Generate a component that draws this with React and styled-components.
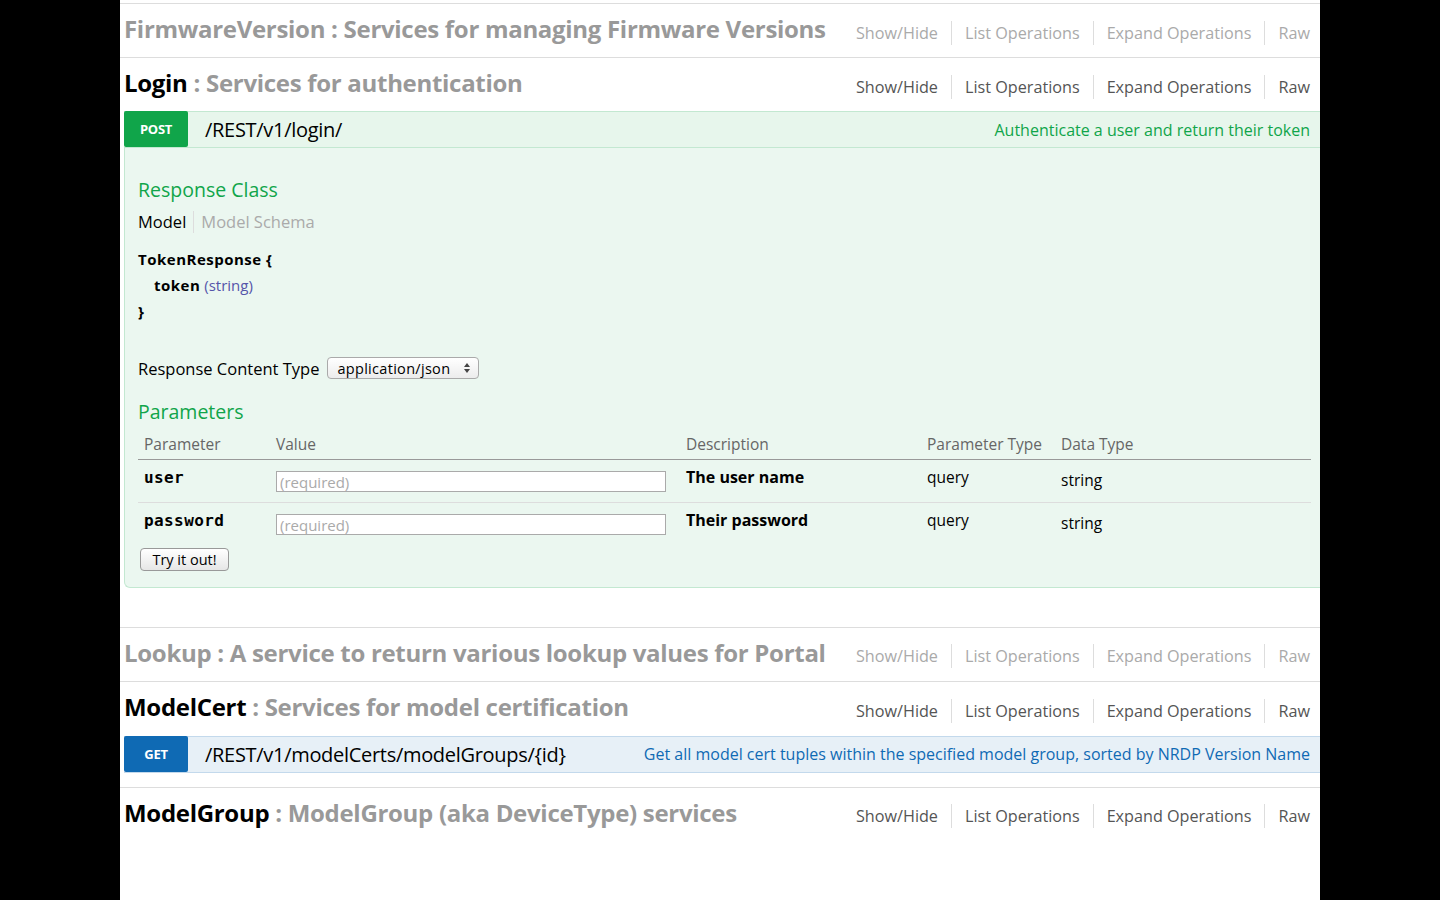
import React from 'react';
import styled, { createGlobalStyle, css } from 'styled-components';

const GlobalStyle = createGlobalStyle`
  html, body {
    margin: 0;
    padding: 0;
    background: #000;
  }
  body {
    font-family: "Open Sans", "DejaVu Sans", sans-serif;
    color: #000;
  }
  * { box-sizing: border-box; }
`;

const METHOD_COLORS = {
  post: { bg: '#e7f6ec', border: '#c3e8d1', badge: '#10a54a', text: '#10a54a' },
  get: { bg: '#e7f0f7', border: '#c3d9ec', badge: '#0f6ab4', text: '#0f6ab4' },
};

const Page = styled.div`
  width: 1200px;
  min-height: 900px;
  margin: 0 auto;
  padding-top: 3px;
  background: #fff;
`;

const ResourceList = styled.ul`
  list-style: none;
  margin: 0;
  padding: 0;
  border-top: 1px solid #ddd;
`;

const Resource = styled.li`
  border-bottom: ${(p) => (p.$last ? 'none' : '1px solid #ddd')};
  padding-bottom: ${(p) => p.$gap || 0}px;
`;

const Heading = styled.div`
  display: flex;
  align-items: center;
  justify-content: space-between;
  height: ${(p) => p.$h || 53}px;
  padding: 0 10px 0 4px;
`;

const Title = styled.h2`
  margin: -4px 0 0;
  font-size: 24px;
  font-weight: 700;
  letter-spacing: -0.3px;
  white-space: nowrap;
  color: #999;
`;

const TitleName = styled.span`
  color: ${(p) => (p.$faded ? '#999' : '#000')};
`;

const Options = styled.ul`
  display: flex;
  flex-shrink: 0;
  list-style: none;
  margin: 4px 0 0;
  padding: 0;
  font-size: 16.2px;
  white-space: nowrap;
  color: ${(p) => (p.$faded ? '#aaa' : '#555')};
`;

const Option = styled.li`
  padding: 0 13px;
  line-height: 24px;
  border-left: 1px solid #ddd;
  &:first-child { border-left: none; }
  &:last-child { padding-right: 0; }
`;

const OpBar = styled.div`
  display: flex;
  align-items: center;
  height: 37px;
  margin-left: 4px;
  background: ${(p) => METHOD_COLORS[p.$method].bg};
  border: 1px solid ${(p) => METHOD_COLORS[p.$method].border};
  border-left: none;
  border-right: none;
`;

const Badge = styled.span`
  width: 64px;
  height: 36px;
  margin-top: -1px;
  display: flex;
  align-items: center;
  justify-content: center;
  background: ${(p) => METHOD_COLORS[p.$method].badge};
  color: #fff;
  font-size: 13px;
  font-weight: 700;
  letter-spacing: -0.3px;
  border-radius: 2px;
`;

const Path = styled.span`
  margin-left: 17px;
  font-size: 20px;
  letter-spacing: -0.3px;
  flex: 1;
`;

const Summary = styled.span`
  padding-right: 10px;
  font-size: 16px;
  color: ${(p) => METHOD_COLORS[p.$method].text};
`;

const Content = styled.div`
  margin-left: 4px;
  padding: 29px 10px 16px 13px;
  background: #ebf7f0;
  border: 1px solid #c3e8d1;
  border-top: none;
  border-right: none;
  border-radius: 0 0 0 6px;
`;

const SectionTitle = styled.h4`
  margin: ${(p) => p.$mt || 0}px 0 0;
  font-size: 19.5px;
  font-weight: 400;
  line-height: 26px;
  color: #10a54a;
`;

const Tabs = styled.div`
  display: flex;
  margin-top: 8px;
  font-size: 16.5px;
  line-height: 22px;
`;

const Tab = styled.span`
  padding: 0 7px;
  color: ${(p) => (p.$active ? '#000' : '#aaa')};
  border-left: ${(p) => (p.$active ? 'none' : '1px solid #ddd')};
  &:first-child { padding-left: 0; }
`;

const Signature = styled.div`
  margin-top: 13px;
  font-size: 15px;
  line-height: 26px;
`;

const SigLine = styled.div`
  padding-left: ${(p) => (p.$indent ? 16 : 0)}px;
`;

const Strong = styled.b`
  font-weight: 700;
  letter-spacing: 0.5px;
`;

const PropType = styled.span`
  color: #55a;
`;

const ContentTypeRow = styled.div`
  display: flex;
  align-items: center;
  gap: 8px;
  margin-top: 32px;
  height: 24px;
  font-size: 16.5px;
`;

const SelectBox = styled.div`
  display: flex;
  align-items: center;
  justify-content: space-between;
  width: 152px;
  height: 22px;
  padding: 0 8px 0 9px;
  font-size: 14.5px;
  letter-spacing: 0.3px;
  border: 1px solid #aaa;
  border-radius: 4px;
  background: linear-gradient(#fff, #ececec);
`;

const ParamTable = styled.table`
  width: 1173px;
  border-collapse: collapse;
  table-layout: fixed;
`;

const Th = styled.th`
  height: 34px;
  padding: 8px 6px 4px;
  text-align: left;
  vertical-align: top;
  font-size: 15.5px;
  font-weight: 400;
  line-height: 22px;
  color: #666;
  border-bottom: 1px solid #999;
`;

const Row = styled.tr`
  height: 43px;
  border-bottom: ${(p) => (p.$last ? 'none' : '1px solid #ddd')};
`;

const Td = styled.td`
  padding: 6px 6px 0;
  vertical-align: top;
  font-size: 15.5px;
  line-height: 22px;
  ${(p) => p.$low && css`padding-top: 9px;`}
`;

const Code = styled.span`
  font-family: "DejaVu Sans Mono", "Liberation Mono", monospace;
  font-weight: 700;
  font-size: 16px;
  letter-spacing: 0.4px;
`;

const Desc = styled.span`
  font-weight: 700;
  font-size: 16px;
`;

const ValueInput = styled.input`
  display: block;
  width: 390px;
  height: 21px;
  margin-top: 5px;
  padding: 0 3px;
  font-family: "Open Sans", sans-serif;
  font-size: 15px;
  border: 1px solid #aaa;
  background: #fff;
  &::placeholder { color: #aaa; }
`;

const TryButton = styled.button`
  display: block;
  margin: 2px 0 0 2px;
  width: 89px;
  height: 23px;
  padding: 0;
  font-family: "Open Sans", sans-serif;
  font-size: 14.5px;
  color: #000;
  border: 1px solid #999;
  border-radius: 4px;
  background: linear-gradient(#fff, #e6e6e6);
`;

const Arrows = () => (
  <svg width="6" height="10" viewBox="0 0 6 10">
    <path d="M0 4 L3 0 L6 4 Z M0 6 L3 10 L6 6 Z" fill="#444" />
  </svg>
);

const OptionLinks = ({ faded }) => (
  <Options $faded={faded}>
    <Option>Show/Hide</Option>
    <Option>List Operations</Option>
    <Option>Expand Operations</Option>
    <Option>Raw</Option>
  </Options>
);

const ResourceHeading = ({ name, desc, faded, h }) => (
  <Heading $h={h}>
    <Title>
      <TitleName $faded={faded}>{name}</TitleName> : {desc}
    </Title>
    <OptionLinks faded={faded} />
  </Heading>
);

const params = [
  { name: 'user', desc: 'The user name' },
  { name: 'password', desc: 'Their password' },
];

export default function App() {
  return (
    <Page>
      <GlobalStyle />
      <ResourceList>
        <Resource>
          <ResourceHeading
            name="FirmwareVersion"
            desc="Services for managing Firmware Versions"
            faded
          />
        </Resource>

        <Resource $gap={39}>
          <ResourceHeading name="Login" desc="Services for authentication" />
          <OpBar $method="post">
            <Badge $method="post">POST</Badge>
            <Path>/REST/v1/login/</Path>
            <Summary $method="post">Authenticate a user and return their token</Summary>
          </OpBar>
          <Content>
            <SectionTitle>Response Class</SectionTitle>
            <Tabs>
              <Tab $active>Model</Tab>
              <Tab>Model Schema</Tab>
            </Tabs>
            <Signature>
              <SigLine><Strong>TokenResponse {'{'}</Strong></SigLine>
              <SigLine $indent>
                <Strong>token</Strong> <PropType>(string)</PropType>
              </SigLine>
              <SigLine><Strong>{'}'}</Strong></SigLine>
            </Signature>
            <ContentTypeRow>
              <span>Response Content Type</span>
              <SelectBox>
                <span>application/json</span>
                <Arrows />
              </SelectBox>
            </ContentTypeRow>
            <SectionTitle $mt={19}>Parameters</SectionTitle>
            <ParamTable>
              <colgroup>
                <col style={{ width: 132 }} />
                <col style={{ width: 410 }} />
                <col style={{ width: 241 }} />
                <col style={{ width: 134 }} />
                <col style={{ width: 256 }} />
              </colgroup>
              <thead>
                <tr>
                  <Th>Parameter</Th>
                  <Th>Value</Th>
                  <Th>Description</Th>
                  <Th>Parameter Type</Th>
                  <Th>Data Type</Th>
                </tr>
              </thead>
              <tbody>
                {params.map((p, i) => (
                  <Row key={p.name} $last={i === params.length - 1}>
                    <Td><Code>{p.name}</Code></Td>
                    <Td>
                      <ValueInput placeholder="(required)" />
                    </Td>
                    <Td><Desc>{p.desc}</Desc></Td>
                    <Td>query</Td>
                    <Td $low>string</Td>
                  </Row>
                ))}
              </tbody>
            </ParamTable>
            <TryButton>Try it out!</TryButton>
          </Content>
        </Resource>

        <Resource>
          <ResourceHeading
            name="Lookup"
            desc="A service to return various lookup values for Portal"
            faded
          />
        </Resource>

        <Resource $gap={14}>
          <ResourceHeading name="ModelCert" desc="Services for model certification" h={54} />
          <OpBar $method="get">
            <Badge $method="get">GET</Badge>
            <Path>/REST/v1/modelCerts/modelGroups/{'{id}'}</Path>
            <Summary $method="get">
              Get all model cert tuples within the specified model group, sorted by NRDP Version Name
            </Summary>
          </OpBar>
        </Resource>

        <Resource $last>
          <ResourceHeading name="ModelGroup" desc="ModelGroup (aka DeviceType) services" />
        </Resource>
      </ResourceList>
    </Page>
  );
}
